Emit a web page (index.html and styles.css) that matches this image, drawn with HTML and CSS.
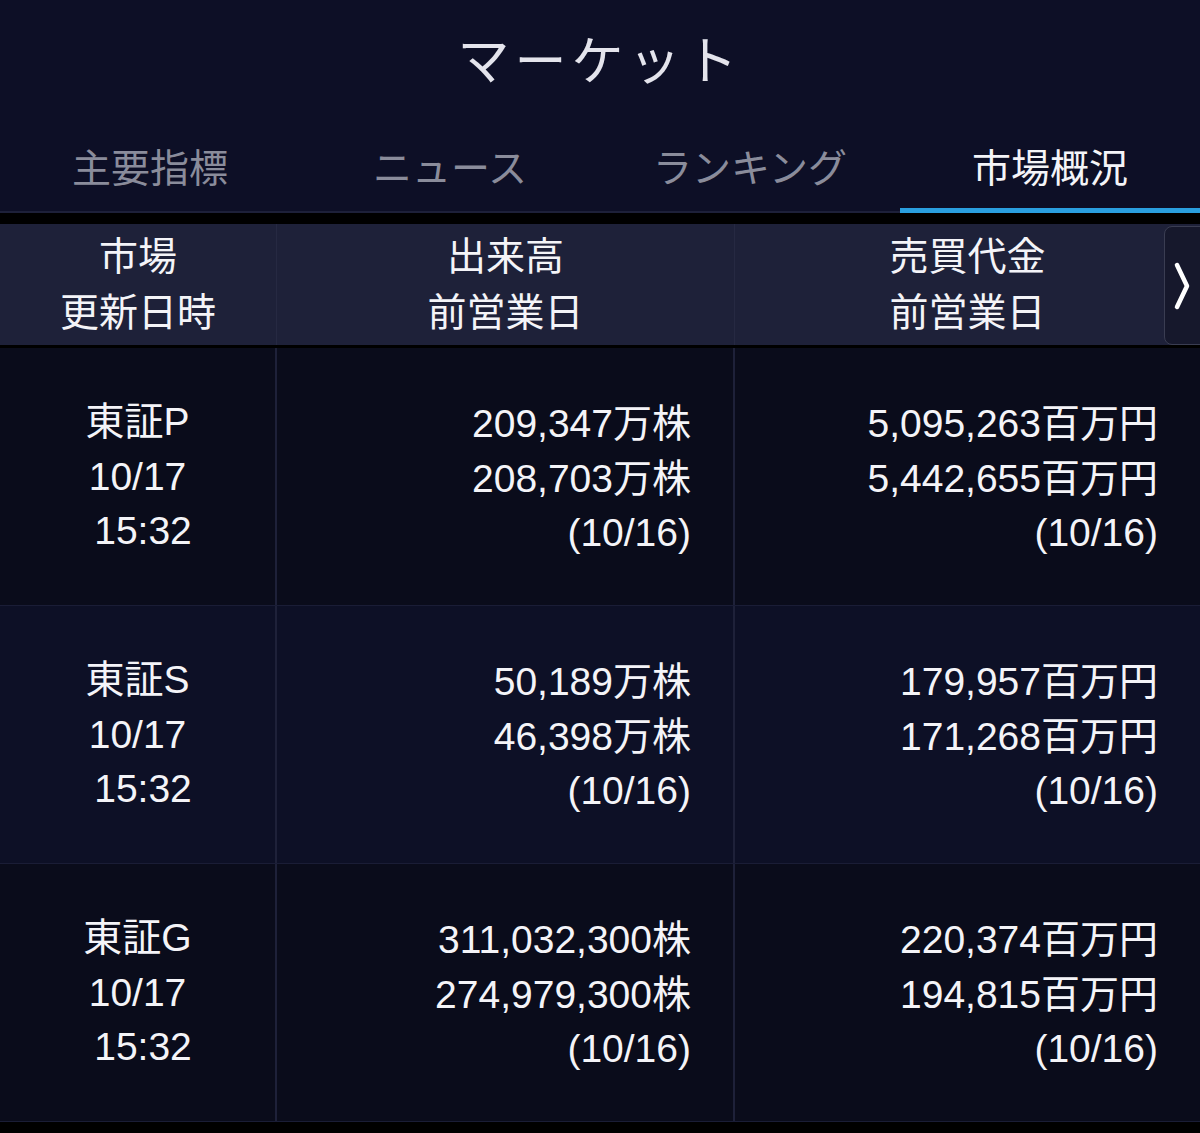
FILE: index.html
```html
<html>

<head>
    <title>マーケット</title>
    <meta charset="utf-8">
    <link rel="stylesheet" href="styles.css">
</head>

<body>
    <header class="topbar">
        <div class="title">マーケット</div>
        <nav class="tabs">
            <div class="tab">主要指標</div>
            <div class="tab">ニュース</div>
            <div class="tab">ランキング</div>
            <div class="tab active">市場概況</div>
        </nav>
    </header>

    <main class="sheet">
        <div class="head-row">
            <div class="head-cell">市場<br>更新日時</div>
            <div class="head-cell">出来高<br>前営業日</div>
            <div class="head-cell">売買代金<br>前営業日</div>
            <button class="next-btn">
                <svg class="chevron" width="18" height="50" viewBox="0 0 18 50">
                    <path d="M4 4 L14 25 L4 46" fill="none" stroke="#fff" stroke-width="4.5" stroke-linecap="round" stroke-linejoin="round"/>
                </svg>
            </button>
        </div>

        <div class="data-row">
            <div class="cell market">東証P<br>10/17<br><span class="time">15:32</span></div>
            <div class="cell num">209,347万株<br>208,703万株<br>(10/16)</div>
            <div class="cell num">5,095,263百万円<br>5,442,655百万円<br>(10/16)</div>
        </div>

        <div class="data-row alt">
            <div class="cell market">東証S<br>10/17<br><span class="time">15:32</span></div>
            <div class="cell num">50,189万株<br>46,398万株<br>(10/16)</div>
            <div class="cell num">179,957百万円<br>171,268百万円<br>(10/16)</div>
        </div>

        <div class="data-row">
            <div class="cell market">東証G<br>10/17<br><span class="time">15:32</span></div>
            <div class="cell num">311,032,300株<br>274,979,300株<br>(10/16)</div>
            <div class="cell num">220,374百万円<br>194,815百万円<br>(10/16)</div>
        </div>
    </main>
</body>

</html>
```

FILE: styles.css
```css
* {
    font-family: "Liberation Sans", "Noto Sans CJK JP", sans-serif;
    box-sizing: border-box;
}

html, body {
    margin: 0;
    padding: 0;
    background: #000;
    color: #f4f4f8;
}

.topbar {
    background: #0d0f26;
    box-shadow: inset 0 -2px 0 #1d2039;
}

.title {
    height: 120px;
    padding-top: 5px;
    line-height: 115px;
    text-align: center;
    font-size: 52px;
    letter-spacing: 5px;
    color: #e4e4ec;
}

.tabs {
    display: grid;
    grid-template-columns: repeat(4, 1fr);
}

.tab {
    padding-top: 9px;
    line-height: 79px;
    text-align: center;
    font-size: 39px;
    color: #8a8c9b;
    border-bottom: 5px solid transparent;
}

.tab.active {
    color: #f4f4f8;
    border-bottom-color: #2a9fdf;
}

.sheet {
    margin-top: 11px;
}

.head-row {
    position: relative;
    display: grid;
    grid-template-columns: 277px 458px 1fr;
    height: 121px;
    background: #1e2139;
    margin-bottom: 3px;
}

.head-cell {
    display: flex;
    align-items: center;
    justify-content: center;
    text-align: center;
    font-size: 39px;
    line-height: 56px;
    border-right: 1px solid #262942;
}

.head-cell:last-of-type {
    border-right: none;
}

.next-btn {
    position: absolute;
    top: 2px;
    right: -8px;
    width: 44px;
    height: 119px;
    padding: 0 0 0 8px;
    background: #16182c;
    border: 1px solid #3a3d52;
    border-radius: 8px;
    display: flex;
    align-items: center;
    justify-content: flex-start;
}

.chevron {
    flex-shrink: 0;
}

.data-row {
    display: grid;
    grid-template-columns: 277px 458px 1fr;
    height: 258px;
    background: #0a0c1b;
    border-bottom: 1px solid #1a1d36;
}

.data-row.alt {
    background: #0d1026;
}

.cell {
    display: flex;
    flex-direction: column;
    justify-content: center;
    font-size: 39px;
    line-height: 54.5px;
    border-right: 2px solid #1e2139;
}

.cell:last-child {
    border-right: none;
}

.cell.market {
    align-items: center;
    text-align: center;
    padding-top: 1px;
}

.cell.market .time {
    padding-left: 11px;
}

.cell.num {
    text-align: right;
    padding-right: 42px;
    display: block;
    padding-top: 49px;
}
```
